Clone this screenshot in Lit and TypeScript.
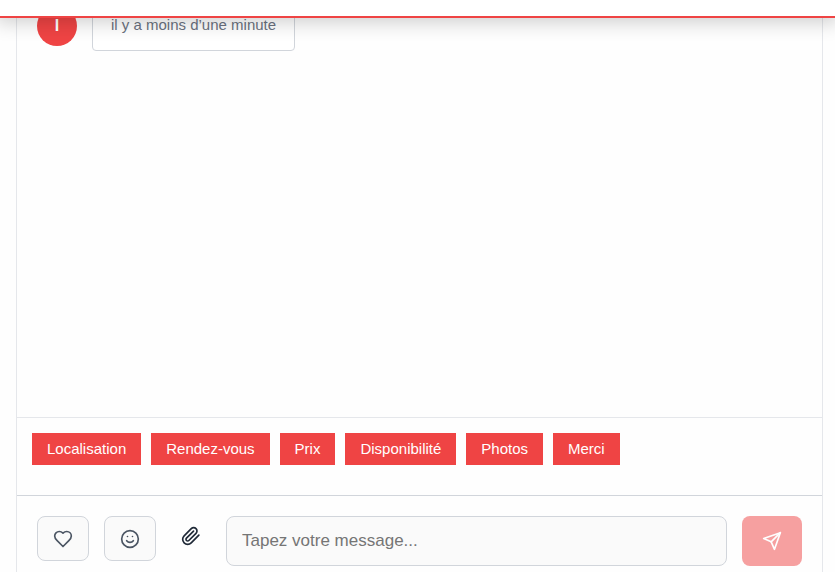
import { LitElement, html, css, svg } from "lit";
import { customElement, state } from "lit/decorators.js";

const heart = svg`<path d="M19 14c1.490-1.460 3-3.210 3-5.500A5.500 5.500 0 0 0 16.500 3c-1.760 0-3 .5-4.500 2-1.500-1.500-2.740-2-4.500-2A5.500 5.500 0 0 0 2 8.500c0 2.300 1.500 4.050 3 5.500l7 7Z"/>`;
const smile = svg`<circle cx="12" cy="12" r="10"/><path d="M8 14s1.500 2 4 2 4-2 4-2"/><path d="M9 9h.01M15 9h.01"/>`;
const clip = svg`<path d="m21.440 11.050-9.190 9.190a6 6 0 0 1-8.490-8.490l8.570-8.570A4 4 0 1 1 18 8.840l-8.590 8.570a2 2 0 0 1-2.830-2.830l8.490-8.480"/>`;
const send = svg`<path d="m22 2-7 20-4-9-9-4Z"/><path d="M22 2 11 13"/>`;

const icon = (shape: unknown) => html`<svg class="icon" viewBox="0 0 24 24" aria-hidden="true">${shape}</svg>`;

@customElement("app-root")
export class AppRoot extends LitElement {
  static styles = css`
    :host {
      display: block;
      height: 100vh;
      overflow: hidden;
      background: #fefefe;
      font-family: "Liberation Sans", Arial, sans-serif;
      font-size: 15px;
      color: #1f2937;
    }
    * { box-sizing: border-box; }
    .topbar {
      position: fixed;
      inset: 0 0 auto;
      z-index: 1;
      height: 18px;
      background: #fff;
      border-bottom: 2px solid #ef4444;
      box-shadow: 0 0 20px 4px rgba(0, 0, 0, 0.2);
    }
    .chat {
      display: flex;
      flex-direction: column;
      height: 100%;
      margin: 0 12px 0 16px;
      border: solid #e5e7eb;
      border-width: 0 1px;
    }
    .messages {
      flex: 1;
      min-height: 0;
      padding: 6px 20px;
    }
    .message {
      display: flex;
      align-items: flex-start;
      gap: 15px;
    }
    .avatar {
      display: grid;
      place-items: center;
      width: 40px;
      height: 40px;
      border-radius: 50%;
      background: #ef4444;
      color: #fff;
      font-size: 16px;
      font-weight: 700;
    }
    .bubble {
      padding: 8px 18px 15px;
      border: 1px solid #d1d5db;
      border-radius: 4px;
      background: #fff;
      color: #6b7280;
      line-height: 20px;
    }
    .replies {
      display: flex;
      flex-wrap: wrap;
      gap: 10px;
      padding: 15px 15px 30px;
      border-top: 1px solid #e5e7eb;
    }
    button {
      font: inherit;
      cursor: pointer;
    }
    .reply {
      height: 32px;
      padding: 0 15px 2px;
      border: 0;
      background: #ef4444;
      color: #fff;
    }
    .composer {
      display: flex;
      align-items: flex-start;
      gap: 15px;
      padding: 20px 20px 6px;
      border-top: 1px solid #d1d5db;
    }
    .tool {
      display: grid;
      place-items: center;
      width: 52px;
      height: 45px;
      padding: 0;
      border: 1px solid #d1d5db;
      border-radius: 8px;
      background: #fafafa;
      color: #4b5563;
    }
    .attach {
      display: grid;
      place-items: center;
      width: 40px;
      height: 40px;
      cursor: pointer;
    }
    .file {
      position: absolute;
      width: 1px;
      height: 1px;
      overflow: hidden;
      clip-path: inset(50%);
    }
    .field {
      flex: 1;
      min-width: 0;
      height: 50px;
      padding: 0 15px;
      border: 1px solid #d1d5db;
      border-radius: 8px;
      background: #fafafa;
      font: inherit;
      font-size: 17px;
    }
    .field::placeholder { color: #757575; }
    .send {
      display: grid;
      place-items: center;
      width: 60px;
      height: 50px;
      padding: 0;
      border: 0;
      border-radius: 8px;
      background: #ef4444;
      color: #fff;
    }
    .send:disabled { opacity: 0.5; }
    .icon {
      width: 20px;
      height: 20px;
      fill: none;
      stroke: currentColor;
      stroke-width: 2;
      stroke-linecap: round;
      stroke-linejoin: round;
    }
  `;

  @state() private draft = "";

  private replies = ["Localisation", "Rendez-vous", "Prix", "Disponibilité", "Photos", "Merci"];

  render() {
    return html`
      <header class="topbar"></header>
      <main class="chat">
        <section class="messages">
          <article class="message">
            <div class="avatar">I</div>
            <div class="bubble"><time>il y a moins d’une minute</time></div>
          </article>
        </section>
        <div class="replies">
          ${this.replies.map(
            (text) => html`<button class="reply" type="button" @click=${() => (this.draft = text)}>${text}</button>`
          )}
        </div>
        <form class="composer" @submit=${(e: Event) => e.preventDefault()}>
          <button class="tool" type="button" aria-label="Favori">${icon(heart)}</button>
          <button class="tool" type="button" aria-label="Emoji">${icon(smile)}</button>
          <label class="attach" for="file">${icon(clip)}</label>
          <input class="file" id="file" type="file" aria-label="Joindre un fichier" />
          <input
            class="field"
            type="text"
            aria-label="Message"
            placeholder="Tapez votre message..."
            .value=${this.draft}
            @input=${(e: Event) => (this.draft = (e.target as HTMLInputElement).value)}
          />
          <button class="send" aria-label="Envoyer" ?disabled=${!this.draft}>${icon(send)}</button>
        </form>
      </main>
    `;
  }
}
